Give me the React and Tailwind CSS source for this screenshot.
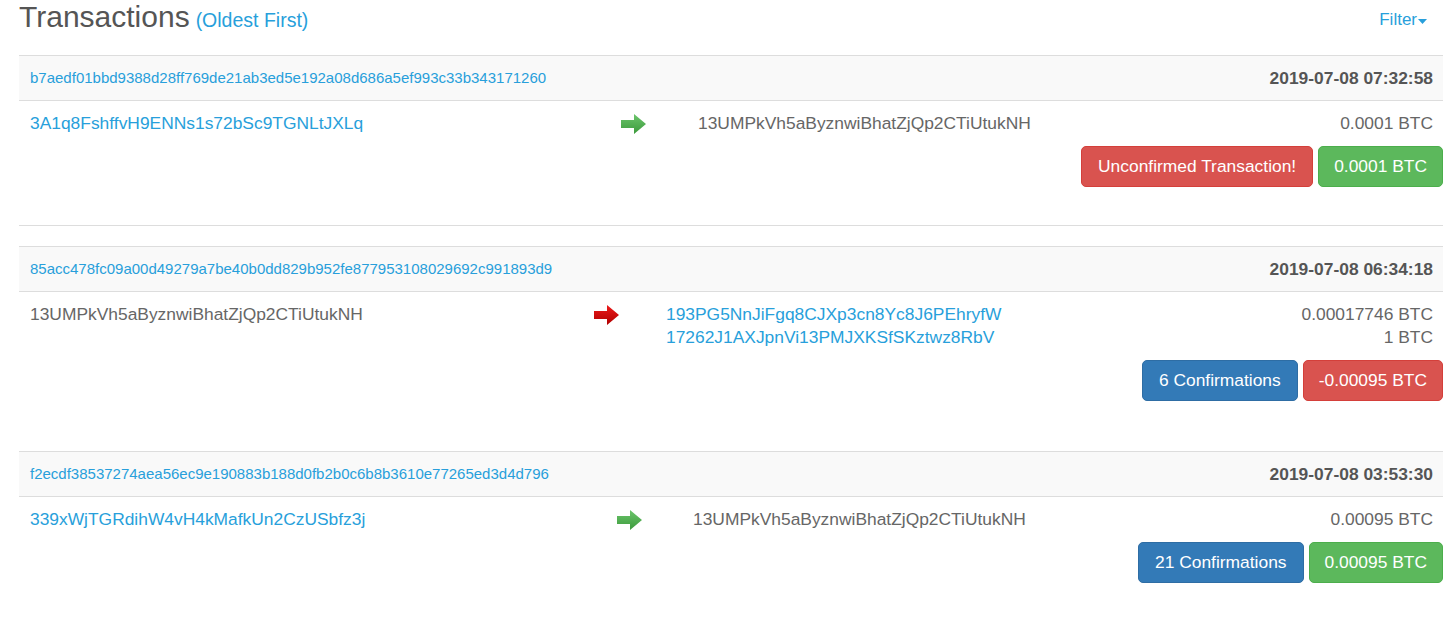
import React from "react";

const txs = [
  {
    hash: "b7aedf01bbd9388d28ff769de21ab3ed5e192a08d686a5ef993c33b343171260",
    time: "2019-07-08 07:32:58",
    from: [{ addr: "3A1q8FshffvH9ENNs1s72bSc9TGNLtJXLq", link: true }],
    to: [{ addr: "13UMPkVh5aByznwiBhatZjQp2CTiUtukNH", link: false }],
    amounts: ["0.0001 BTC"],
    dir: "in",
    fromW: "w-[602px]",
    arrowW: "w-[77px]",
    status: { text: "Unconfirmed Transaction!", tone: "red" },
    value: { text: "0.0001 BTC", tone: "green" },
    foot: "pb-[38px] border-b border-[#dddddd] mb-[20px]",
  },
  {
    hash: "85acc478fc09a00d49279a7be40b0dd829b952fe877953108029692c991893d9",
    time: "2019-07-08 06:34:18",
    from: [{ addr: "13UMPkVh5aByznwiBhatZjQp2CTiUtukNH", link: false }],
    to: [
      { addr: "193PG5NnJiFgq8CJXp3cn8Yc8J6PEhryfW", link: true },
      { addr: "17262J1AXJpnVi13PMJXKSfSKztwz8RbV", link: true },
    ],
    amounts: ["0.00017746 BTC", "1 BTC"],
    dir: "out",
    fromW: "w-[575px]",
    arrowW: "w-[72px]",
    status: { text: "6 Confirmations", tone: "blue" },
    value: { text: "-0.00095 BTC", tone: "red" },
    foot: "pb-[50px]",
  },
  {
    hash: "f2ecdf38537274aea56ec9e190883b188d0fb2b0c6b8b3610e77265ed3d4d796",
    time: "2019-07-08 03:53:30",
    from: [{ addr: "339xWjTGRdihW4vH4kMafkUn2CzUSbfz3j", link: true }],
    to: [{ addr: "13UMPkVh5aByznwiBhatZjQp2CTiUtukNH", link: false }],
    amounts: ["0.00095 BTC"],
    dir: "in",
    fromW: "w-[598px]",
    arrowW: "w-[76px]",
    status: { text: "21 Confirmations", tone: "blue" },
    value: { text: "0.00095 BTC", tone: "green" },
    foot: "pb-[40px]",
  },
];

const tones = {
  red: "bg-[#d9534f] border-[#d43f3a]",
  green: "bg-[#5cb85c] border-[#4cae4c]",
  blue: "bg-[#337ab7] border-[#2e6da4]",
};

// gradient arrow, green for incoming, red for outgoing
const Arrow = ({ dir }) => {
  const id = dir === "in" ? "arrowIn" : "arrowOut";
  return (
    <svg width="25" height="20" viewBox="0 0 25 20">
      <defs>
        <linearGradient id={id} x1="0" y1="0" x2="0" y2="1">
          {dir === "in" ? (
            <>
              <stop offset="0%" stopColor="#6cc56c" />
              <stop offset="100%" stopColor="#3c9a3c" />
            </>
          ) : (
            <>
              <stop offset="0%" stopColor="#ec1a1a" />
              <stop offset="100%" stopColor="#b00000" />
            </>
          )}
        </linearGradient>
      </defs>
      <polygon points="0,6 13,6 13,0 25,10 13,20 13,14 0,14" fill={`url(#${id})`} />
    </svg>
  );
};

const Addr = ({ item }) => (
  <div className={item.link ? "text-[#289fdb]" : "text-[#666666]"}>{item.addr}</div>
);

const Tx = ({ tx }) => (
  <div className={tx.foot}>
    <div className="h-[46px] flex items-center justify-between border-y border-[#dddddd] bg-[#f9f9f9] pl-[11px] pr-[10px]">
      <span className="text-[15px] text-[#289fdb]">{tx.hash}</span>
      <span className="text-[17.4px] font-bold text-[#555555]">{tx.time}</span>
    </div>
    <div className="flex pt-[11px] text-[17.4px] leading-[23px]">
      <div className={`${tx.fromW} shrink-0 pl-[11px]`}>
        {tx.from.map((f) => (
          <Addr key={f.addr} item={f} />
        ))}
      </div>
      <div className={`${tx.arrowW} shrink-0 h-[23px] flex items-center`}>
        <Arrow dir={tx.dir} />
      </div>
      <div className="flex-1">
        {tx.to.map((t) => (
          <Addr key={t.addr} item={t} />
        ))}
      </div>
      <div className="pr-[10px] text-right text-[#666666]">
        {tx.amounts.map((a, i) => (
          <div key={i}>{a}</div>
        ))}
      </div>
    </div>
    <div className="flex justify-end gap-[5px] mt-[11px]">
      <span className={`h-[41px] px-4 flex items-center rounded-[5px] border text-[17.4px] text-white ${tones[tx.status.tone]}`}>
        {tx.status.text}
      </span>
      <span className={`h-[41px] px-[15px] flex items-center rounded-[5px] border text-[17.4px] text-white ${tones[tx.value.tone]}`}>
        {tx.value.text}
      </span>
    </div>
  </div>
);

export default function App() {
  return (
    <div className="min-h-screen bg-white pl-[19px] pr-[10px] font-['Liberation_Sans',Arial,sans-serif]">
      <div className="h-[55px] flex justify-between">
        <div className="flex items-baseline h-[33px] leading-[33px]">
          <span className="text-[30px] text-[#555555]">Transactions</span>
          <span className="ml-[6px] text-[19.5px] text-[#289fdb]">(Oldest First)</span>
        </div>
        <div className="flex items-center h-[40px] pr-[16px] text-[17px] text-[#289fdb]">
          Filter
          <svg width="9" height="5" viewBox="0 0 9 5" className="ml-[1px] mt-[3px]">
            <polygon points="0,0 9,0 4.5,5" fill="#289fdb" />
          </svg>
        </div>
      </div>
      {txs.map((tx) => (
        <Tx key={tx.hash} tx={tx} />
      ))}
    </div>
  );
}
